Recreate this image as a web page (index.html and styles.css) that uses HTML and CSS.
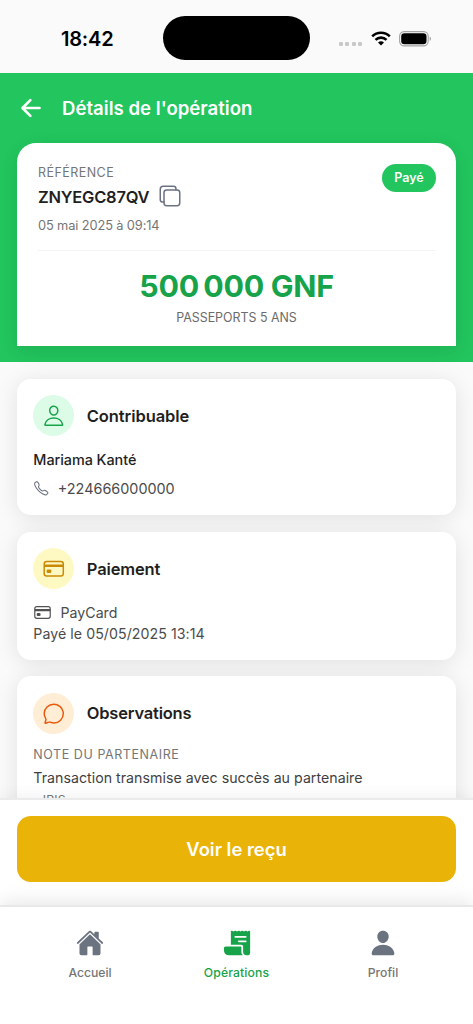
FILE: index.html
```html
<!DOCTYPE html>
<html lang="fr">
<head>
<meta charset="utf-8">
<meta name="viewport" content="width=device-width, initial-scale=1">
<title>Détails de l'opération</title>
<link rel="stylesheet" href="styles.css">
</head>
<body>
<div class="screen">
  <div class="status">
    <div class="status-time"><span class="time">18:42</span></div>
    <div class="island"></div>
    <div class="status-icons">
      <div class="dots"><i></i><i></i><i></i><i></i></div>
      <svg class="wifi" viewBox="0 0 20 15"><path d="M1.2 5.4a12.6 12.6 0 0 1 17.6 0M4.5 8.9a7.8 7.8 0 0 1 11 0" fill="none" stroke="#000" stroke-width="2.6"/><path d="M10 14.6l-3-3a4.3 4.3 0 0 1 6 0z"/></svg>
      <svg class="battery" viewBox="0 0 33 16"><rect x=".6" y=".6" width="28.6" height="14.3" rx="4.6" fill="none" stroke="#a3a3a3" stroke-width="1.1"/><rect x="2.2" y="2.2" width="25.3" height="11.1" rx="3.2"/><path d="M30.7 5.6c1.8.7 1.8 3.7 0 4.3z" fill="#a3a3a3"/></svg>
    </div>
  </div>

  <header class="header">
    <div class="header-bar">
      <svg class="icon-back" viewBox="0 0 512 512"><path d="M244 400L100 256l144-144M120 256h292"/></svg>
      <h1 class="header-title">Détails de l'opération</h1>
    </div>
    <section class="summary">
      <div class="summary-top">
        <div>
          <div class="label ref-label">RÉFÉRENCE</div>
          <div class="ref-row">
            <span class="ref">ZNYEGC87QV</span>
            <svg class="icon-copy line" viewBox="0 0 512 512"><rect x="128" y="128" width="336" height="336" rx="57"/><path d="M383.5 128l.5-24a56.16 56.16 0 00-56-56H112a64.19 64.19 0 00-64 64v216a56.16 56.16 0 0056 56h24"/></svg>
          </div>
          <div class="ref-date">05 mai 2025 à 09:14</div>
        </div>
        <span class="badge">Payé</span>
      </div>
      <div class="amount">500&#8239;000 GNF</div>
      <div class="product">PASSEPORTS 5 ANS</div>
    </section>
  </header>

  <main class="content">
    <section class="card">
      <div class="card-head">
        <div class="disc disc-green"><svg class="line" viewBox="0 0 512 512"><path d="M344 144c-3.92 52.87-44 96-88 96s-84.15-43.12-88-96c-4-55 35-96 88-96s92 42 88 96z"/><path d="M256 304c-87 0-175.3 48-191.64 138.6C62.39 453.52 68.57 464 80 464h352c11.44 0 17.62-10.48 15.65-21.4C431.3 352 343 304 256 304z"/></svg></div>
        <h2 class="card-title title-person">Contribuable</h2>
      </div>
      <div class="name">Mariama Kanté</div>
      <div class="row phone-row">
        <svg class="icon-phone line" viewBox="0 0 512 512"><path d="M451 374c-15.88-16-54.34-39.35-73-48.76-24.3-12.24-26.3-13.24-45.4.95-12.74 9.47-21.21 17.93-36.12 14.75s-47.31-21.11-75.68-49.39-47.34-61.62-50.53-76.48 5.41-23.23 14.79-36c13.22-18 12.22-21 .92-45.3-8.81-18.9-32.84-57-48.9-72.8C119.9 44 119.9 47 108.83 51.6A160.15 160.15 0 0083 65.37C67 76 58.12 84.83 51.91 98.1s-9 44.38 23.07 102.64 54.57 88.05 101.14 134.49S258.5 406.64 310.85 436c64.76 36.27 89.6 29.2 102.91 23s22.18-15 32.83-31a159.09 159.09 0 0013.8-25.8C465 391.17 468 391.17 451 374z"/></svg>
        <span class="phone">+224666000000</span>
      </div>
    </section>

    <section class="card">
      <div class="card-head">
        <div class="disc disc-yellow"><svg class="line" viewBox="0 0 512 512"><rect x="48" y="96" width="416" height="320" rx="56"/><path class="band" d="M48 192h416M128 300h48v20h-48z"/></svg></div>
        <h2 class="card-title title-payment">Paiement</h2>
      </div>
      <div class="row pay-row">
        <svg class="icon-card line" viewBox="0 0 512 512"><rect x="48" y="96" width="416" height="320" rx="56"/><path class="band" d="M48 192h416M128 300h48v20h-48z"/></svg>
        <span class="method">PayCard</span>
      </div>
      <div class="paid-on">Payé le 05/05/2025 13:14</div>
    </section>

    <section class="card">
      <div class="card-head">
        <div class="disc disc-orange"><svg class="line" viewBox="0 0 512 512"><path d="M87.49 380c1.19-4.38-1.44-10.47-3.95-14.86a44.86 44.86 0 00-2.54-3.8 199.81 199.81 0 01-33-110C47.65 139.09 140.73 48 255.83 48 356.21 48 440 117.54 459.58 209.85a199 199 0 014.42 41.64c0 112.41-89.49 204.93-204.59 204.93-18.3 0-43-4.6-56.47-8.37s-26.92-8.77-30.39-10.11a31.09 31.09 0 00-11.12-2.07 30.71 30.71 0 00-12.09 2.43l-67.83 24.48a16 16 0 01-4.67 1.22 9.6 9.6 0 01-9.57-9.74 15.85 15.85 0 01.6-3.29z"/></svg></div>
        <h2 class="card-title title-notes">Observations</h2>
      </div>
      <div class="label note-label">NOTE DU PARTENAIRE</div>
      <div class="note">Transaction transmise avec succès au partenaire</div>
      <div class="signature">- IRIS</div>
    </section>
  </main>

  <div class="action"><button class="button">Voir le reçu</button></div>

  <nav class="tabs">
    <a class="tab">
      <svg viewBox="0 0 512 512"><path d="M261.56 101.28a8 8 0 00-11.06 0L66.4 277.15a8 8 0 00-2.47 5.79L63.9 448a32 32 0 0032 32H192a16 16 0 0016-16V328a8 8 0 018-8h80a8 8 0 018 8v136a16 16 0 0016 16h96.06a32 32 0 0032-32V282.94a8 8 0 00-2.47-5.79z"/><path d="M490.91 244.15l-74.8-71.56V64a16 16 0 00-16-16h-48a16 16 0 00-16 16v32l-57.92-55.38C272.77 35.14 264.71 32 256 32c-8.68 0-16.72 3.14-22.14 8.63l-212.7 203.5c-6.22 6-7 15.87-1.34 22.37A16 16 0 0043 267.56L250.5 69.28a8 8 0 0111.06 0l207.52 198.28a16 16 0 0022.59-.44c6.14-6.36 5.63-16.86-.76-22.97z"/></svg>
      <span>Accueil</span>
    </a>
    <a class="tab active">
      <svg viewBox="0 0 512 512"><path d="M483.82 32.45a16.28 16.28 0 00-11.23 1.37L448 46.1l-24.8-12.4a16 16 0 00-14.31 0l-25.11 12.41L359 33.7a16 16 0 00-14.36 0L320 46.07l-24.45-12.34a16 16 0 00-14.35-.06L256 46.12l-24.8-12.43a16.05 16.05 0 00-14.33 0L192 46.1l-24.84-12.41a16 16 0 00-19.36 3.94 16.25 16.25 0 00-3.8 10.65V288l.05.05H336a32 32 0 0132 32V424c0 30.93 33.07 56 64 56h12a52 52 0 0052-52V48a16 16 0 00-12.18-15.55zM416 240H288.5c-8.64 0-16.1-6.64-16.48-15.28A16 16 0 01288 208h127.5c8.64 0 16.1 6.64 16.48 15.28A16 16 0 01416 240zm0-80H224.5c-8.64 0-16.1-6.64-16.48-15.28A16 16 0 01224 128h191.5c8.64 0 16.1 6.64 16.48 15.28A16 16 0 01416 160z"/><path d="M336 424v-88a16 16 0 00-16-16H48a32.1 32.1 0 00-32 32.05c0 50.55 5.78 71.57 14.46 87.57C45.19 466.79 71.86 480 112 480h245.68a4 4 0 002.85-6.81C351.07 463.7 336 451 336 424z"/></svg>
      <span>Opérations</span>
    </a>
    <a class="tab">
      <svg viewBox="0 0 512 512"><path d="M332.64 64.58C313.18 43.57 286 32 256 32c-30.16 0-57.43 11.5-76.8 32.38-19.58 21.11-29.12 49.8-26.88 80.78C156.76 206.28 203.27 256 256 256s99.16-49.71 103.67-110.82c2.27-30.7-7.33-59.33-27.03-80.6zM432 480H80a31 31 0 01-24.2-11.13c-6.5-7.77-9.12-18.38-7.18-29.11C57.06 392.94 83.4 353.61 124.8 326c36.78-24.51 83.37-38 131.2-38s94.42 13.5 131.2 38c41.4 27.6 67.74 66.93 76.18 113.75 1.94 10.73-.68 21.34-7.18 29.11A31 31 0 01432 480z"/></svg>
      <span>Profil</span>
    </a>
  </nav>
</div>
</body>
</html>
```
FILE: styles.css
```css
* { box-sizing: border-box; margin: 0; padding: 0; }
body { font-family: Inter, "Liberation Sans", sans-serif; color: #1f1f1f; background: #fafafa; }
svg { display: block; flex: none; }
.screen { width: 473px; height: 1024px; display: flex; flex-direction: column; overflow: hidden; background: #fafafa; }
.line { fill: none; stroke: currentColor; stroke-width: 32; stroke-linecap: round; stroke-linejoin: round; }
.band { stroke-width: 56; stroke-linecap: butt; }

.status { flex: none; height: 73px; display: grid; grid-template-columns: 163px 147px 1fr; align-items: start; color: #000; }
.status-time { padding: 26px 0 0 61px; }
.time { display: block; font-size: 20px; font-weight: 600; line-height: 26px; letter-spacing: -0.2px; white-space: nowrap; }
.island { height: 44px; margin-top: 16px; border-radius: 22px; background: #000; }
.status-icons { display: flex; align-items: center; height: 16px; margin-top: 30.5px; padding-left: 29px; }
.dots { display: flex; gap: 2.3px; padding-top: 10px; width: 32px; }
.dots i { width: 4px; height: 4px; border-radius: 1.3px; background: #c8c8c8; }
.wifi { width: 20px; height: 15px; }
.battery { width: 33px; height: 16px; margin-left: 8px; }

.header { flex: none; height: 289px; padding: 0 17px; background: #22c55e; }
.header-bar { height: 69.5px; display: flex; align-items: center; gap: 17px; }
.icon-back { width: 28px; height: 28px; fill: none; stroke: #fff; stroke-width: 48; stroke-linecap: round; stroke-linejoin: round; }
.header-title { font-size: 18.6px; font-weight: 600; line-height: 24px; letter-spacing: 0.01px; color: #fff; white-space: nowrap; }
.summary { height: 203.5px; padding: 21px 20px 0 21px; background: #fff; border-radius: 19px 19px 0 0; box-shadow: 0 5px 18px rgba(0, 0, 0, .1); }
.summary-top { height: 87px; display: flex; justify-content: space-between; align-items: flex-start; border-bottom: 1px solid #f3f3f3; }
.label { color: #757575; white-space: nowrap; }
.ref-label { font-size: 12.5px; line-height: 17px; letter-spacing: .45px; }
.ref-row { height: 32px; display: flex; align-items: center; gap: 9px; }
.ref { font-size: 16.5px; font-weight: 600; letter-spacing: -0.25px; }
.icon-copy { width: 24px; height: 24px; margin-top: -1px; color: #6b7280; }
.ref-date { font-size: 12.8px; line-height: 17px; margin-top: 4px; letter-spacing: -.11px; color: #757575; white-space: nowrap; }
.badge { height: 28.5px; width: 54px; border-radius: 15px; background: #22c55e; color: #fff; font-size: 12.5px; font-weight: 600; line-height: 28px; text-align: center; }
.amount { margin-top: 16px; margin-left: -1px; font-size: 30.4px; font-weight: 700; line-height: 38px; letter-spacing: -0.3px; text-align: center; color: #16a34a; white-space: nowrap; }
.product { margin-top: 4px; margin-left: -1px; font-size: 12.4px; line-height: 17px; text-align: center; color: #6b6b6b; }

.content { flex: 1; min-height: 0; overflow: hidden; padding: 16.5px 17px 0; display: flex; flex-direction: column; gap: 16.7px; }
.card { flex: none; padding: 16.5px 16.3px 16px; background: #fff; border-radius: 14px; box-shadow: 0 3px 22px rgba(0, 0, 0, .1); }
.card-head { display: flex; align-items: center; gap: 12.5px; }
.disc { width: 41px; height: 41px; border-radius: 50%; display: grid; place-items: center; }
.disc svg { width: 23.5px; height: 23.5px; }
.disc-green { background: #dcfce7; color: #16a34a; }
.disc-yellow { background: #fef9c3; color: #ca8a04; }
.disc-orange { background: #ffedd5; color: #ea580c; }
.card-title { font-size: 16.5px; font-weight: 600; line-height: 22px; letter-spacing: -0.08px; white-space: nowrap; }
.title-payment { letter-spacing: -0.15px; }
.title-notes { letter-spacing: -0.2px; }
.name { margin-top: 12.5px; font-size: 14.4px; font-weight: 500; line-height: 21px; letter-spacing: -0.04px; }
.row { display: flex; align-items: center; }
.phone-row { height: 21px; margin-top: 8.6px; gap: 8px; padding-bottom: 1px; }
.icon-phone { width: 16.5px; height: 16.5px; color: #6b7280; }
.phone { font-size: 14.4px; color: #4b4b4b; }
.pay-row { height: 21px; margin-top: 12.3px; gap: 8.5px; }
.icon-card { width: 19px; height: 19px; margin-left: -.3px; color: #525252; }
.method, .paid-on { font-size: 14.2px; color: #4b4b4b; }
.paid-on { line-height: 21px; letter-spacing: .05px; }
.note-label { margin-top: 12.4px; font-size: 12.5px; line-height: 17px; letter-spacing: .57px; }
.note { margin-top: 3.5px; font-size: 14.2px; line-height: 22px; letter-spacing: .02px; color: #3f3f3f; white-space: nowrap; }
.signature { margin-top: 3.5px; font-size: 12.2px; line-height: 16px; letter-spacing: .2px; color: #757575; }

.action { flex: none; height: 107px; padding: 16px 17px 0; background: #fff; border-top: 2px solid #ebebeb; box-shadow: 0 -3px 14px rgba(0, 0, 0, .05); position: relative; }
.button { display: block; width: 439px; height: 66px; border: 0; border-radius: 14px; background: #eab308; color: #fff; font: 600 18.4px/66px Inter, sans-serif; }
.tabs { flex: none; height: 119px; display: grid; grid-template-columns: 146.5px 146.5px 146.5px; justify-content: center; background: #fff; border-top: 2px solid #e8e8e8; box-shadow: 0 -4px 18px rgba(0, 0, 0, .09); position: relative; }
.tab { display: flex; flex-direction: column; align-items: center; padding-top: 22px; gap: 6.5px; color: #757575; font-size: 12.2px; font-weight: 500; line-height: 17px; }
.tab svg { width: 28px; height: 28px; fill: #6b7280; }
.tab.active { color: #16a34a; letter-spacing: .15px; }
.tab.active svg { fill: #16a34a; }
```
